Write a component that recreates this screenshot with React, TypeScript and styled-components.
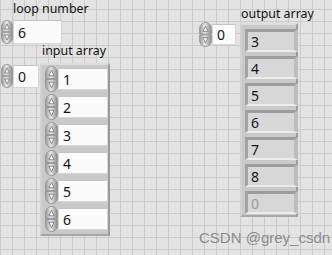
import React from "react";
import styled, { createGlobalStyle } from "styled-components";

const Global = createGlobalStyle`
  html, body { margin: 0; padding: 0; background: #e3e3e3; }
  body { font-family: "Noto Sans", "Liberation Sans", sans-serif; }
`;

const Panel = styled.div`
  position: relative;
  width: 332px;
  height: 255px;
  overflow: hidden;
  background-color: #e3e3e3;
  background-image:
    linear-gradient(to right, #cbcbcb 1px, transparent 1px),
    linear-gradient(to bottom, #cbcbcb 1px, transparent 1px);
  background-size: 12px 12px;
  background-position: 0 9px;
`;

const Placed = styled.div<{ $x: number; $y: number }>`
  position: absolute;
  left: ${(p) => p.$x}px;
  top: ${(p) => p.$y}px;
`;

const Label = styled(Placed)`
  font-family: "Noto Sans", "Liberation Sans", sans-serif;
  font-size: 12.4px;
  line-height: 18px;
  color: #111;
  white-space: nowrap;
`;

const Watermark = styled(Placed)`
  font-family: "Liberation Sans", "Noto Sans", sans-serif;
  font-size: 15px;
  line-height: 18px;
  color: #8c8c8c;
  white-space: nowrap;
`;

const NumRow = styled.div<{ $h: number }>`
  display: flex;
  align-items: center;
  height: ${(p) => p.$h}px;
`;

const ControlBox = styled.div<{ $w: number; $h: number }>`
  box-sizing: border-box;
  width: ${(p) => p.$w}px;
  height: ${(p) => p.$h}px;
  background: #fbfbfb;
  border: 1px solid #d6d6d6;
  border-top-color: #c4c4c4;
  display: flex;
  align-items: center;
  padding-left: 4px;
  font-family: "Noto Sans", "Liberation Sans", sans-serif;
  font-size: 14px;
  color: #151515;
`;

const IndicatorBox = styled.div<{ $dim?: boolean }>`
  box-sizing: border-box;
  width: 53px;
  height: 23px;
  background: #d7d7d7;
  border-style: solid;
  border-width: 3px 4px 2px 3px;
  border-color: #9d9d9d #bdbdbd #ececec #a3a3a3;
  display: flex;
  align-items: center;
  padding-left: 3px;
  font-family: "Noto Sans", "Liberation Sans", sans-serif;
  font-size: 14px;
  color: ${(p) => (p.$dim ? "#9a9a9a" : "#151515")};
`;

const ArrayFrame = styled(Placed)<{ $w: number; $h: number; $pad: string; $gap: number }>`
  box-sizing: border-box;
  width: ${(p) => p.$w}px;
  height: ${(p) => p.$h}px;
  padding: ${(p) => p.$pad};
  background: #c9c9c9;
  border-style: solid;
  border-width: 2px;
  border-color: #dcdcdc #9b9b9b #a8a8a8 #d2d2d2;
  display: flex;
  flex-direction: column;
  gap: ${(p) => p.$gap}px;
`;

const SpinSvg = styled.svg`
  display: block;
  flex: none;
`;

const Spinner = ({ w = 12, h = 24 }: { w?: number; h?: number }) => (
  <SpinSvg width={w} height={h} viewBox="0 0 12 24" preserveAspectRatio="none">
    <defs>
      <linearGradient id="spg" x1="0" x2="1" y1="0" y2="0">
        <stop offset="0" stopColor="#9a9a9a" />
        <stop offset="0.45" stopColor="#e6e6e6" />
        <stop offset="1" stopColor="#8c8c8c" />
      </linearGradient>
    </defs>
    <path d="M0.6 11.6 V6 A5.4 5.6 0 0 1 11.4 6 V11.6 Z" fill="url(#spg)" stroke="#8a8a8a" strokeWidth="0.7" />
    <path d="M0.6 12.4 V18 A5.4 5.6 0 0 0 11.4 18 V12.4 Z" fill="url(#spg)" stroke="#8a8a8a" strokeWidth="0.7" />
    <path d="M6 4 L8.4 9 H3.6 Z" fill="#f4f4f4" stroke="#6c6c6c" strokeWidth="0.7" />
    <path d="M6 20 L8.4 15 H3.6 Z" fill="#f4f4f4" stroke="#6c6c6c" strokeWidth="0.7" />
  </SpinSvg>
);

const ElemRow = styled.div`
  display: flex;
  align-items: center;
  height: 22px;
`;

const inputValues = ["1", "2", "3", "4", "5", "6"];
const outputValues = ["3", "4", "5", "6", "7", "8"];

export default function App() {
  return (
    <>
      <Global />
      <Panel>
        <Label $x={13} $y={0}>loop number</Label>
        <Placed $x={1} $y={20}>
          <NumRow $h={24}>
            <Spinner w={12} h={24} />
            <ControlBox $w={49} $h={24}>6</ControlBox>
          </NumRow>
        </Placed>

        <Label $x={42} $y={42}>input array</Label>
        <Placed $x={1} $y={64}>
          <NumRow $h={24}>
            <Spinner w={12} h={24} />
            <ControlBox $w={26} $h={23}>0</ControlBox>
          </NumRow>
        </Placed>
        <ArrayFrame $x={40} $y={63} $w={70} $h={173} $pad="3px 0 0 3px" $gap={6}>
          {inputValues.map((v) => (
            <ElemRow key={v}>
              <Spinner w={13} h={26} />
              <ControlBox $w={50} $h={22}>{v}</ControlBox>
            </ElemRow>
          ))}
        </ArrayFrame>

        <Label $x={241} $y={5}>output array</Label>
        <Placed $x={199} $y={22}>
          <NumRow $h={25}>
            <Spinner w={13} h={25} />
            <ControlBox $w={24} $h={21}>0</ControlBox>
          </NumRow>
        </Placed>
        <ArrayFrame $x={240} $y={23} $w={58} $h={194} $pad="4px 0 0 3px" $gap={4}>
          {outputValues.map((v) => (
            <IndicatorBox key={v}>{v}</IndicatorBox>
          ))}
          <IndicatorBox $dim>0</IndicatorBox>
        </ArrayFrame>

        <Watermark $x={199} $y={229}>CSDN @grey_csdn</Watermark>
      </Panel>
    </>
  );
}
